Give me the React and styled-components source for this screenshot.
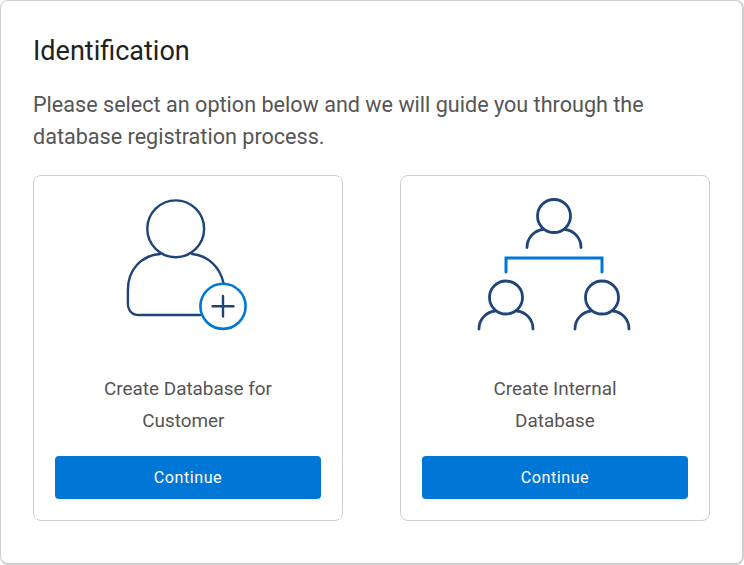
import styled, { createGlobalStyle } from "styled-components";

const Global = createGlobalStyle`
  * { box-sizing: border-box; }
  html, body { margin: 0; padding: 0; background: #fff; }
  body { font-family: Roboto, "Liberation Sans", sans-serif; }
`;
const Panel = styled.div`
  width: 744px;
  height: 565px;
  background: #fff;
  border: 1px solid #cfcfcf;
  border-bottom-width: 2px;
  border-right-width: 2px;
  border-radius: 8px;
  padding: 32px 32px 0 32px;
`;
const Title = styled.h1`
  margin: 0;
  font-size: 27px;
  line-height: 36px;
  font-weight: 400;
  color: #212121;
`;
const Intro = styled.p`
  margin: 20px 0 0;
  font-size: 21.6px;
  line-height: 32px;
  color: #555;
`;
const Cards = styled.div`
  display: flex;
  justify-content: space-between;
  margin-top: 22px;
`;
const Card = styled.div`
  width: 310px;
  height: 346px;
  border: 1px solid #ccced2;
  border-radius: 8px;
  padding: 0 21px;
  display: flex;
  flex-direction: column;
`;
const IconBox = styled.div`
  height: 180px;
  display: flex;
  justify-content: center;
`;
const Label = styled.div`
  height: 100px;
  padding-top: 17px;
  text-align: center;
  font-size: 18.9px;
  line-height: 32px;
  color: #555;
  white-space: pre-wrap;
`;
const Continue = styled.button`
  width: 266px;
  height: 43px;
  border: 0;
  border-radius: 4px;
  background: #0076d6;
  color: #fff;
  font-family: inherit;
  font-size: 16.2px;
  font-weight: 400;
  letter-spacing: 0.5px;
`;

const Navy = "#1f4478";
const Blue = "#0076d6";

function AddPersonIcon() {
  return (
    <svg width="266" height="180" viewBox="55 176 266 180" fill="none" strokeWidth="2.4" strokeLinecap="round">
      <circle cx="175.7" cy="228.8" r="28.4" stroke={Navy} />
      <path
        d="M160 254C141 255.5 127.9 270 127.9 290V303C127.9 310.5 132 315 139 315H200M192 254C208 255.5 220 267 223.5 283"
        stroke={Navy}
      />
      <circle cx="223" cy="306.3" r="22.6" stroke={Blue} strokeWidth="2.6" />
      <path d="M212.5 306.3H233.5M223 296V316.5" stroke={Navy} />
    </svg>
  );
}

function Person({ x, y }) {
  return (
    <g stroke={Navy}>
      <circle cx={x} cy={y} r="16.5" />
      <path d={`M${x - 27} ${y + 31.5}A18 18 0 0 1 ${x - 11} ${y + 13.5}M${x + 11} ${y + 13.5}A18 18 0 0 1 ${x + 27} ${y + 31.5}`} />
    </g>
  );
}

function OrgIcon() {
  return (
    <svg width="266" height="180" viewBox="422 176 266 180" fill="none" strokeWidth="2.8" strokeLinecap="round">
      <Person x={554} y={216} />
      <path d="M506 272V258H602V272" stroke={Blue} strokeWidth="3" />
      <Person x={506} y={297.5} />
      <Person x={602} y={297.5} />
    </svg>
  );
}

export default function App() {
  return (
    <>
      <Global />
      <Panel>
        <Title>Identification</Title>
        <Intro>Please select an option below and we will guide you through the database registration process.</Intro>
        <Cards>
          <Card>
            <IconBox>
              <AddPersonIcon />
            </IconBox>
            <Label>
              Create Database for
              <br />
              Customer{"\u00a0\u00a0"}
            </Label>
            <Continue>Continue</Continue>
          </Card>
          <Card>
            <IconBox>
              <OrgIcon />
            </IconBox>
            <Label>
              Create Internal
              <br />
              Database
            </Label>
            <Continue>Continue</Continue>
          </Card>
        </Cards>
      </Panel>
    </>
  );
}
